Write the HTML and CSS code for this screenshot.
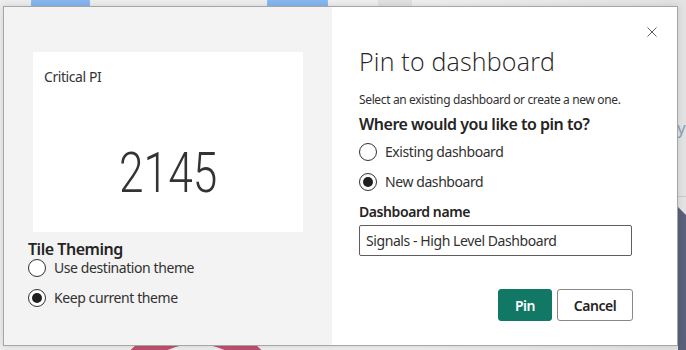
FILE: index.html
```html
<!DOCTYPE html>
<html lang="en">
<head>
    <meta charset="UTF-8">
    <title>Pin to dashboard</title>
    <link rel="stylesheet" href="styles.css">
</head>
<body>
    <!-- report page behind the modal -->
    <div class="backdrop">
        <span class="blob blue-one"></span>
        <span class="blob blue-two"></span>
        <span class="blob gray-one"></span>
        <span class="blob pink-ring"></span>
        <span class="side-text">y</span>
        <span class="side-line"></span>
        <span class="side-navy"></span>
    </div>

    <div class="dialog">
        <div class="preview">
            <div class="tile">
                <div class="tile-title">Critical PI</div>
                <div class="tile-value"><span>2145</span></div>
            </div>
            <div class="theming">
                <h3>Tile Theming</h3>
                <label class="radio"><span class="circle"></span>Use destination theme</label>
                <label class="radio checked"><span class="circle"></span>Keep current theme</label>
            </div>
        </div>

        <div class="form">
            <button class="close" aria-label="Close">
                <svg width="10" height="10" viewBox="0 0 10 10">
                    <path d="M0.5 0.5 L9.5 9.5 M9.5 0.5 L0.5 9.5" stroke="#605e5c" stroke-width="1" fill="none"/>
                </svg>
            </button>
            <h1>Pin to dashboard</h1>
            <p class="subtitle">Select an existing dashboard or create a new one.</p>
            <h2>Where would you like to pin to?</h2>
            <div class="choices">
                <label class="radio"><span class="circle"></span>Existing dashboard</label>
                <label class="radio checked"><span class="circle"></span>New dashboard</label>
            </div>

            <label class="field-label" for="dash-name">Dashboard name</label>
            <input id="dash-name" class="text-input" type="text" value="Signals - High Level Dashboard">

            <div class="actions">
                <button class="btn btn-primary">Pin</button>
                <button class="btn">Cancel</button>
            </div>
        </div>
    </div>
</body>
</html>
```

FILE: styles.css
```css
* {
    margin: 0;
    padding: 0;
    box-sizing: border-box;
    font-family: 'Noto Sans', sans-serif;
    letter-spacing: -0.03em;
}

html, body {
    overflow: hidden;
}

body {
    width: 686px;
    height: 350px;
    position: relative;
    background: #e6e6e6;
    padding: 6px 0 0 3px;
    color: #323130;
}

/* background page fragments */
.backdrop {
    position: absolute;
    inset: 0;
    overflow: hidden;
    background: linear-gradient(90deg, #ececec 0%, #eeeeee 60%, #e2e2e2 100%);
}

.blob {
    position: absolute;
    display: block;
}

.blue-one {
    left: 31px;
    top: -40px;
    width: 59px;
    height: 90px;
    border-radius: 50%;
    background: #86b6ef;
}

.blue-two {
    left: 267px;
    top: -40px;
    width: 61px;
    height: 90px;
    border-radius: 50%;
    background: #86b6ef;
}

.gray-one {
    left: 378px;
    top: 0;
    width: 34px;
    height: 6px;
    background: #e0e0e0;
}

.pink-ring {
    left: 106px;
    top: 322px;
    width: 180px;
    height: 180px;
    border-radius: 50%;
    border: 22px solid #c0506f;
}

.side-text {
    position: absolute;
    left: 677px;
    top: 116px;
    font-size: 17px;
    color: #8aa0b8;
}

.side-line {
    position: absolute;
    left: 678px;
    top: 196px;
    width: 8px;
    height: 1px;
    background: #c8c8c8;
}

.side-navy {
    position: absolute;
    left: 678px;
    top: 207px;
    width: 8px;
    height: 143px;
    background: #5a6079;
    clip-path: polygon(0 0, 100% 8px, 100% 100%, 0 100%);
}

/* modal */
.dialog {
    position: relative;
    width: 675px;
    height: 340px;
    display: grid;
    grid-template-columns: 328px 1fr;
    background: #ffffff;
    border: 1px solid #a6a6a6;
    box-shadow: 0 0 6px rgba(0, 0, 0, 0.12);
}

.preview {
    background: #f3f3f3;
    padding: 45px 0 0 24px;
}

.tile {
    width: 270px;
    height: 180px;
    margin-left: 5px;
    background: #ffffff;
    padding: 15px 11px 12px;
    display: flex;
    flex-direction: column;
}

.tile-title {
    font-size: 14px;
    color: #333333;
    line-height: 20px;
}

.tile-value {
    flex: 1;
    display: flex;
    justify-content: center;
    align-items: center;
    padding-top: 38px;
}

.tile-value span {
    font-family: 'Roboto', sans-serif;
    font-weight: 300;
    font-size: 56px;
    letter-spacing: 0;
    color: #333333;
    display: inline-block;
    transform: scaleX(0.79);
}

.theming {
    margin-top: 7px;
}

h3 {
    font-size: 16px;
    font-weight: 600;
    color: #252423;
    line-height: 20px;
    margin-bottom: -6px;
}

.radio {
    display: flex;
    align-items: center;
    gap: 8px;
    font-size: 14px;
    line-height: 20px;
    color: #323130;
    height: 30px;
}

.circle {
    width: 18px;
    height: 18px;
    border: 1px solid #323130;
    border-radius: 50%;
    background: #ffffff;
    display: flex;
    align-items: center;
    justify-content: center;
}

.radio.checked .circle::after {
    content: "";
    width: 10px;
    height: 10px;
    border-radius: 50%;
    background: #201f1e;
}

.form {
    position: relative;
    padding: 38px 0 0 27px;
}

.close {
    position: absolute;
    top: 20px;
    right: 20px;
    border: none;
    background: none;
    width: 10px;
    height: 10px;
    display: flex;
}

h1 {
    font-family: 'Open Sans', sans-serif;
    font-size: 25px;
    font-weight: 300;
    letter-spacing: 0.2px;
    color: #252423;
    line-height: 32px;
}

.subtitle {
    font-size: 12px;
    line-height: 16px;
    margin-top: 15px;
    color: #323130;
}

h2 {
    font-size: 16px;
    font-weight: 600;
    color: #252423;
    line-height: 22px;
    margin-top: 5px;
}

.choices {
    margin-top: 2px;
}

.field-label {
    display: block;
    font-size: 14px;
    font-weight: 600;
    color: #252423;
    line-height: 20px;
    margin-top: 5px;
}

.text-input {
    display: block;
    margin-top: 3px;
    width: 273px;
    height: 31px;
    border: 1px solid #605e5c;
    border-radius: 2px;
    padding: 0 6px;
    font-size: 14px;
    color: #323130;
    outline: none;
}

.actions {
    display: flex;
    gap: 5px;
    margin-top: 33px;
    margin-left: 139px;
}

.btn {
    height: 32px;
    min-width: 76px;
    padding: 0 12px;
    border: 1px solid #8a8886;
    border-radius: 3px;
    background: #ffffff;
    font-size: 14px;
    font-weight: 600;
    color: #252423;
}

.btn-primary {
    min-width: 54px;
    background: #117865;
    border-color: #117865;
    color: #ffffff;
}
```
